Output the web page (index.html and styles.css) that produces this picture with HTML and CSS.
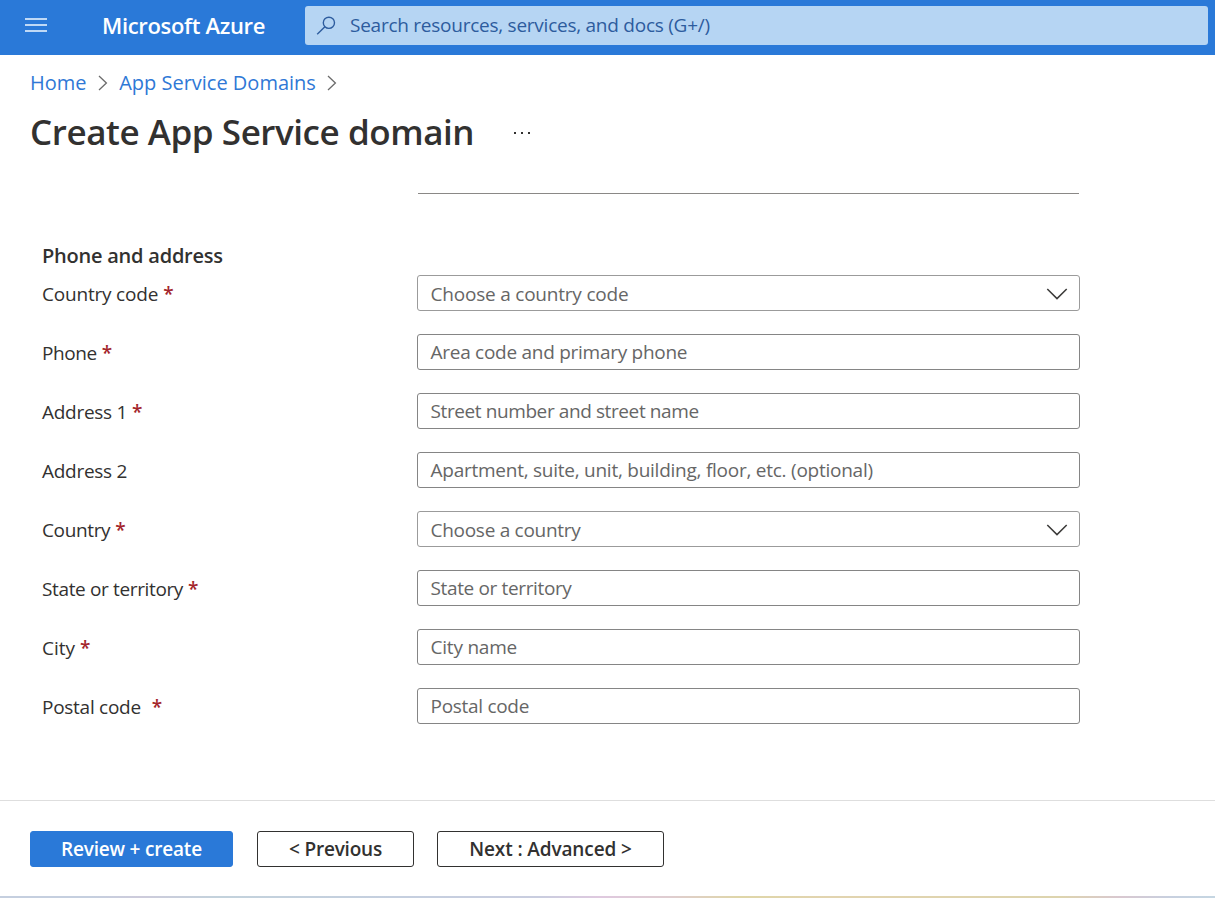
FILE: index.html
```html
<!DOCTYPE html>
<html lang="en">
<head>
<meta charset="utf-8">
<title>Create App Service domain - Microsoft Azure</title>
<link rel="stylesheet" href="styles.css">
</head>
<body>
<div class="page">
  <header class="topbar">
    <svg class="menu-icon" width="22" height="14" viewBox="0 0 22 14"><path d="M0 1h22M0 7h22M0 13h22" stroke="#bfd9f6" stroke-width="1.8"/></svg>
    <div class="brand"><span class="t-brand">Microsoft Azure</span></div>
    <div class="search">
      <svg width="20" height="20" viewBox="0 0 20 20" fill="none" stroke="#2d5c9e" stroke-width="1.4"><circle cx="12.9" cy="6.8" r="5.6"/><path d="M8.9 10.8L1.2 18.3"/></svg>
      <span class="t-search">Search resources, services, and docs (G+/)</span>
    </div>
  </header>
  <nav class="breadcrumb">
    <a class="t-home">Home</a>
    <svg width="10" height="16" viewBox="0 0 10 16" fill="none" stroke="#6b6b6b" stroke-width="1.3"><path d="M1 1l7.4 7L1 15"/></svg>
    <a class="t-domains">App Service Domains</a>
    <svg width="10" height="16" viewBox="0 0 10 16" fill="none" stroke="#6b6b6b" stroke-width="1.3"><path d="M1 1l7.4 7L1 15"/></svg>
  </nav>
  <div class="title-row">
    <h1 class="t-title">Create App Service domain</h1>
    <svg class="more" width="18" height="4" viewBox="0 0 18 4" fill="#323130"><path d="M1 1h2v2H1zM8 1h2v2H8zM15 1h2v2h-2z"/></svg>
  </div>
  <main class="content">
    <div class="field-edge"></div>
    <h2 class="t-heading">Phone and address</h2>
    <div class="form">
      <div class="row"><div class="label"><span class="l-cc">Country code</span><b>*</b></div><div class="field select"><span class="f-cc">Choose a country code</span><svg width="22" height="12" viewBox="0 0 22 12" fill="none" stroke="#3b3a39" stroke-width="1.5"><path d="M1.3 1L11 10.6 20.7 1"/></svg></div></div>
      <div class="row"><div class="label"><span class="l-phone">Phone</span><b>*</b></div><div class="field"><span class="f-phone">Area code and primary phone</span></div></div>
      <div class="row"><div class="label"><span class="l-address">Address 1</span><b>*</b></div><div class="field"><span class="f-a1">Street number and street name</span></div></div>
      <div class="row"><div class="label"><span class="l-address">Address 2</span></div><div class="field"><span class="f-a2">Apartment, suite, unit, building, floor, etc. (optional)</span></div></div>
      <div class="row"><div class="label"><span class="l-country">Country</span><b>*</b></div><div class="field select"><span class="f-country">Choose a country</span><svg width="22" height="12" viewBox="0 0 22 12" fill="none" stroke="#3b3a39" stroke-width="1.5"><path d="M1.3 1L11 10.6 20.7 1"/></svg></div></div>
      <div class="row"><div class="label"><span class="l-state">State or territory</span><b>*</b></div><div class="field"><span class="f-state">State or territory</span></div></div>
      <div class="row"><div class="label"><span class="l-city">City</span><b>*</b></div><div class="field"><span class="f-city">City name</span></div></div>
      <div class="row"><div class="label wide-gap"><span class="l-postal">Postal code</span><b>*</b></div><div class="field"><span class="f-postal">Postal code</span></div></div>
    </div>
  </main>
  <footer class="actions">
    <div class="button primary"><span class="b-review">Review + create</span></div>
    <div class="button previous"><span class="b-prev">&lt; Previous</span></div>
    <div class="button next"><span class="b-next">Next : Advanced &gt;</span></div>
  </footer>
  <div class="color-strip"></div>
</div>
</body>
</html>
```
FILE: styles.css
```css
* { box-sizing: border-box; }
body { margin: 0; background: #fff; font-family: "Open Sans", "Noto Sans", sans-serif; color: #323130; }
.page { width: 1215px; height: 898px; display: flex; flex-direction: column; overflow: hidden; white-space: nowrap; }
svg { flex: none; display: block; }
h1, h2 { margin: 0; font-weight: 600; }

.topbar { height: 55px; flex: none; background: #2a79d8; display: flex; padding: 6px 7px 10px 25px; }
.menu-icon { margin-top: 12px; }
.brand { width: 258px; padding-left: 55px; color: #fff; font-size: 22px; font-weight: 600; line-height: 38px; letter-spacing: -0.33px; }
.search { flex: 1; height: 39px; background: #b6d5f3; border-radius: 3px; display: flex; align-items: center; padding-left: 11px; gap: 14px; font-size: 19px; line-height: 36px; color: #2d5c9e; letter-spacing: -0.25px; }
.t-search { height: 38px; }

.breadcrumb { height: 56px; flex: none; display: flex; align-items: center; padding: 0 0 1px 30px; gap: 11.3px; font-size: 20px; color: #2f78d6; }
.title-row { height: 44px; flex: none; display: flex; align-items: center; padding-left: 30px; gap: 39px; }
.t-title { font-size: 35px; line-height: 44px; height: 46px; letter-spacing: -0.44px; }

.content { flex: 1; padding: 38px 0 0 42px; }
.field-edge { width: 661px; height: 1px; margin-left: 376px; background: #8a8886; }
.t-heading { margin-top: 47px; height: 34px; font-size: 20px; line-height: 30px; letter-spacing: -0.23px; }
.form { display: flex; flex-direction: column; gap: 23px; }
.row { display: grid; grid-template-columns: 375px 663px; grid-template-rows: 36px; height: 36px; }
.label { display: flex; align-items: center; gap: 5px; font-size: 19px; line-height: 36px; height: 38px; }
.label b { color: #a4262c; font-weight: 600; }
.wide-gap { gap: 11px; }
.field { border: 1px solid #858585; border-radius: 3px; display: flex; align-items: center; justify-content: space-between; padding: 0 11px 0 12.5px; font-size: 19px; line-height: 34px; color: #666; }
.select { border-color: #9b9b9b; padding-top: 2px; }

/* Tracking per string */
.l-cc { letter-spacing: -0.2px; }
.l-phone { letter-spacing: -0.4px; }
.l-address { letter-spacing: -0.28px; }
.l-country, .l-state { letter-spacing: -0.36px; }
.l-postal { letter-spacing: -0.27px; }
.f-cc { letter-spacing: -0.21px; }
.f-phone { letter-spacing: -0.27px; }
.f-a1 { letter-spacing: -0.4px; }
.f-a2 { letter-spacing: -0.25px; }
.f-country { letter-spacing: -0.28px; }
.f-state { letter-spacing: -0.36px; }
.f-city { letter-spacing: -0.22px; }
.f-postal { letter-spacing: -0.3px; }
.b-review, .b-prev { letter-spacing: -0.2px; }
.b-next { letter-spacing: -0.12px; }

.actions { height: 96px; flex: none; border-top: 1px solid #dedede; display: flex; padding: 30px 0 0 30px; }
.button { height: 36px; border: 1px solid #323130; border-radius: 3px; display: flex; align-items: center; justify-content: center; font-size: 19px; font-weight: 600; line-height: 34px; }
.primary { width: 203px; background: #2a79d8; border-color: #2a79d8; color: #fff; }
.previous { width: 157px; margin-left: 24px; }
.next { width: 227px; margin-left: 23px; }
.color-strip { height: 2px; flex: none; background: linear-gradient(90deg, #c5cfdf 0, #c5cfdf 90px, #cdcbdb 140px, #c3d2dc 220px, #c5cfdf 400px, #c9cddf 540px, #dfc9df 600px, #dfcdd0 670px, #dfd6a8 740px, #e2d4b0 830px, #ddd4ae 1060px, #d9c8d0 1120px, #c8d0df 1170px, #c5d6e2 1215px); }
```
